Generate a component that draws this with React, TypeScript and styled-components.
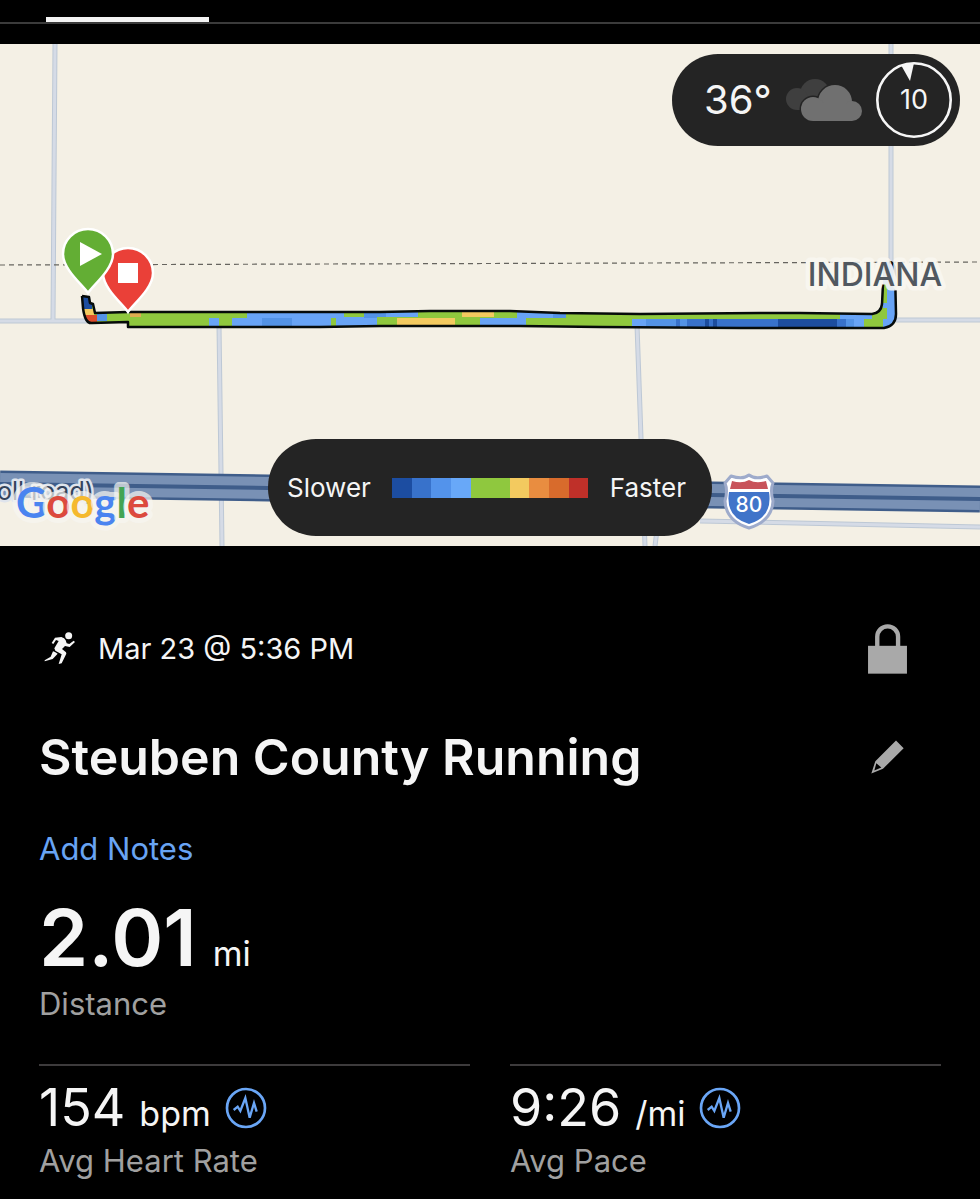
import React from "react";
import styled, { createGlobalStyle } from "styled-components";

const GlobalStyle = createGlobalStyle`
  *, *::before, *::after { box-sizing: border-box; }
  body {
    margin: 0;
    background: #000;
    color: #f5f5f5;
    font-family: Inter, "Liberation Sans", sans-serif;
  }
`;

const Page = styled.main`
  min-height: 100vh;
  background: #000;
`;

const TabBar = styled.header`
  height: 44px;
  padding: 17px 46px 0;
`;

const ActiveTab = styled.div`
  width: 163px;
  height: 5px;
  background: #f4f4f4;
`;

const TabRule = styled.div`
  height: 2px;
  margin: 0 -46px;
  background: #3b3b3b;
`;

const MapSection = styled.section`
  position: relative;
`;

const MapDrawing = styled.svg`
  display: block;
  width: 100%;
  height: auto;
`;

const Pill = styled.div`
  position: absolute;
  display: flex;
  align-items: center;
  background: #242424;
  border-radius: 48px;
`;

const WeatherPill = styled(Pill)`
  top: 10px;
  right: 20px;
  height: 92px;
  padding: 0 8px 0 32px;
`;

const Temperature = styled.span`
  width: 82px;
  font-size: 40px;
  line-height: 48px;
`;

const Dial = styled.div`
  display: flex;
  margin-left: 14px;
`;

const LegendPill = styled(Pill)`
  bottom: 10px;
  left: 50%;
  width: 444px;
  height: 97px;
  padding: 0 26px 0 19px;
  transform: translateX(-50%);
  justify-content: space-between;
  font-size: 26px;
  line-height: 32px;
`;

const Scale = styled.div`
  display: flex;
  width: 196px;
  height: 20px;
`;

const Swatch = styled.div<{ $color: string }>`
  flex: 1;
  background: ${(p) => p.$color};
`;

const Details = styled.section`
  padding: 70px 39px 16px;
`;

const Row = styled.div<{ $height: number }>`
  display: flex;
  align-items: center;
  justify-content: space-between;
  min-height: ${(p) => p.$height}px;
`;

const Meta = styled.div`
  display: flex;
  align-items: center;
  gap: 22px;
  padding-left: 5px;
  font-size: 29px;
  line-height: 40px;
`;

const Title = styled.h1`
  margin: 0;
  font-size: 50px;
  font-weight: 600;
  line-height: 64px;
`;

const IconButton = styled.button`
  display: flex;
  align-items: center;
  justify-content: center;
  width: 48px;
  height: 56px;
  margin-right: 30px;
  padding: 0;
  border: 0;
  background: none;
  color: #a9a9a9;
`;

const TitleRow = styled(Row)`
  margin: 43px 0 40px;
`;

const NotesButton = styled.button`
  display: block;
  padding: 0;
  border: 0;
  background: none;
  color: #68a4f4;
  font: inherit;
  font-size: 31px;
  line-height: 40px;
`;

const Distance = styled.div`
  margin: 24px 0 40px;
`;

const Reading = styled.div<{ $large?: boolean }>`
  display: flex;
  align-items: baseline;
  gap: ${(p) => (p.$large ? 16 : 14)}px;
  font-size: ${(p) => (p.$large ? 79 : 52)}px;
  font-weight: ${(p) => (p.$large ? 600 : 400)};
  line-height: ${(p) => (p.$large ? 88 : 60)}px;
`;

const Unit = styled.span`
  font-size: 34px;
  font-weight: 400;
  line-height: 34px;
`;

const StatLabel = styled.div`
  margin-top: 3px;
  color: #a0a0a0;
  font-size: 31px;
  line-height: 40px;
`;

const StatGrid = styled.div`
  display: grid;
  grid-template-columns: 1fr 1fr;
  gap: 40px;
`;

const Stat = styled.article`
  padding-top: 12px;
  border-top: 2px solid #3d3b3c;
`;

const ChartButton = styled.button`
  align-self: center;
  display: flex;
  padding: 0;
  border: 0;
  background: none;
  color: #6aa6f6;
`;

const paceColors = [
  "#1c4da1", "#3872cb", "#5393eb", "#68a8f8", "#8fc83e",
  "#8fc83e", "#f3ca5f", "#e98d40", "#d86b2c", "#bf3029",
];

const GREEN = "#8fc83e";
const SKY = "#68a4f6";
const AZURE = "#5393e6";
const BLUE = "#3872cb";
const NAVY = "#1c4d9f";
const YELLOW = "#f3ca5f";

// Pace segments of the route: x start, x end, y start, y end, colour.
const segments: [number, number, number, number, string][] = [
  [76, 92, 290, 309, NAVY],
  [84, 94, 309, 315, YELLOW],
  [84, 97, 315, 330, "#dc4b2b"],
  [97, 107, 313, 321, AZURE],
  [130, 141, 313, 317, "#dfae50"],
  [209, 219, 318, 330, SKY],
  [232, 377, 318, 330, SKY],
  [247, 374, 308, 318, SKY],
  [262, 292, 318, 330, AZURE],
  [331, 336, 318, 330, GREEN],
  [344, 364, 308, 317, GREEN],
  [364, 386, 308, 318, AZURE],
  [386, 418, 308, 317, SKY],
  [377, 397, 317, 330, GREEN],
  [397, 455, 318, 330, YELLOW],
  [462, 494, 308, 317, YELLOW],
  [480, 526, 318, 330, SKY],
  [517, 553, 308, 318, SKY],
  [553, 566, 308, 318, AZURE],
  [632, 646, 319, 330, SKY],
  [646, 687, 319, 330, AZURE],
  [676, 680, 319, 330, BLUE],
  [687, 846, 319, 330, BLUE],
  [705, 709, 319, 330, NAVY],
  [713, 717, 319, 330, NAVY],
  [778, 837, 319, 330, NAVY],
  [846, 854, 319, 330, AZURE],
  [854, 864, 319, 330, SKY],
  [840, 872, 308, 319, SKY],
  [883, 900, 255, 332, SKY],
  [882, 887, 284, 303, GREEN],
  [879, 887, 308, 319, GREEN],
];

const topEdge =
  "L95 313 L128 312 L300 312 L380 312 L430 311 L510 311 L560 313 L640 314 L760 313 L800 313 L872 314 Q881 313 882 304 L883 284";
const bottomEdge =
  "M82 296 L83 308 Q85 324 92 323 L128 322 L128 327 L320 327 L380 326 L520 326 L600 327 L740 328 L884 328 Q896 326 896 314 L895 270 Q894 262 889 262";

const roads =
  "M55 44 L53 320 M0 321 H88 M891 44 V265 M896 320 H980 M219 325 L222 546 M637 325 L641 438 L645 546 M657 530 L655 546 M700 521 L980 527";
const interstate = "M0 484 L268 488 L712 495 L980 499";

function RouteMap() {
  return (
    <MapDrawing viewBox="0 44 980 502" role="img" aria-label="Route map">
      <rect x="0" y="44" width="980" height="502" fill="#f4f0e5" />
      <path d={roads} fill="none" stroke="#bdc8d5" strokeWidth="5" />
      <path d={roads} fill="none" stroke="#d5dbe6" strokeWidth="3" />
      <path d="M0 265 L980 262" stroke="#66645f" strokeWidth="1.2" strokeDasharray="5 4" fill="none" />

      <path d={interstate} stroke="#3f5d8a" strokeWidth="27" fill="none" />
      <path d={interstate} stroke="#7991b5" strokeWidth="22" fill="none" />
      <path d={interstate} stroke="#3f5d8a" strokeWidth="4" fill="none" />

      <text x="-3" y="500" fontSize="25" fill="#33435b" stroke="#dfe4ec" strokeWidth="5"
        strokeLinejoin="round" paintOrder="stroke">oll road)</text>
      <text x="16" y="518" fontFamily="Lato, Inter, sans-serif" fontSize="42" fontWeight="700"
        stroke="#f7f6f2" strokeOpacity="0.7" strokeWidth="10" strokeLinejoin="round" paintOrder="stroke">
        <tspan fill="#4a84f0">G</tspan><tspan fill="#dc4a3d">o</tspan><tspan fill="#f5b92e">o</tspan><tspan fill="#4a84f0">g</tspan><tspan fill="#43a454">l</tspan><tspan fill="#dc4a3d">e</tspan>
      </text>

      <g strokeLinejoin="round">
        <path d="M749 475 Q743 480 731 476 L725 483 Q728 490 725 501 Q726 521 749 528 Q772 521 773 501 Q770 490 773 483 L767 476 Q755 480 749 475Z"
          fill="#fff" stroke="#9eabcb" strokeWidth="3" />
        <path d="M730 489 L732 481 Q742 484 749 480 Q756 484 766 481 L768 489Z" fill="#c8535b" />
        <path d="M729 492 H769 Q773 517 749 524 Q725 517 729 492Z" fill="#4174c9" />
      </g>
      <text x="749" y="512" fontSize="21" fontWeight="500" fill="#fff" textAnchor="middle">80</text>

      <clipPath id="ribbon">
        <path d={`${bottomEdge} L883 262 L883 284 L882 304 Q881 313 872 314 L800 313 L760 313 L640 314 L560 313 L510 311 L430 311 L380 312 L300 312 L128 312 L95 313 L93 304 L89 303 L89 297Z`} />
      </clipPath>
      <g clipPath="url(#ribbon)" shapeRendering="crispEdges">
        <rect x="76" y="255" width="824" height="77" fill={GREEN} />
        {segments.map(([x1, x2, y1, y2, color], i) => (
          <rect key={i} x={x1} y={y1} width={x2 - x1} height={y2 - y1} fill={color} />
        ))}
      </g>
      <g fill="none" stroke="#060b0a" strokeWidth="2.5" strokeLinejoin="round">
        <path d={bottomEdge} />
        <path d={`M82 296 L89 297 L90 303 L93 304 ${topEdge}`} />
      </g>

      <text x="875" y="286" fontSize="32" fontWeight="500" fill="#515860" textAnchor="middle"
        stroke="#f9f7f1" strokeOpacity="0.88" strokeWidth="9" strokeLinejoin="round" paintOrder="stroke">INDIANA</text>

      <g stroke="#fff" strokeWidth="2.5">
        <path d="M128 312 C124 305 103 289 103 273 A25 25 0 0 1 153 273 C153 289 132 305 128 312Z" fill="#ea4038" />
        <path d="M88 293 C84 286 63 270 63 254 A25 25 0 0 1 113 254 C113 270 92 286 88 293Z" fill="#63ae34" />
      </g>
      <rect x="118" y="263" width="20" height="20" fill="#fff" />
      <path d="M80 242 L102 254 L80 266Z" fill="#fff" />
    </MapDrawing>
  );
}

function CloudIcon() {
  return (
    <svg width="76" height="44" viewBox="786 78 76 44" aria-hidden="true">
      <g fill="#3f3f3f">
        <circle cx="815" cy="94" r="15" />
        <circle cx="797" cy="99" r="11" />
        <rect x="797" y="96" width="20" height="14" />
      </g>
      <g fill="#707070">
        <g stroke="#242424" strokeWidth="3">
          <circle cx="835" cy="102" r="17" />
          <circle cx="813" cy="109" r="12" />
          <circle cx="852" cy="111" r="10" />
        </g>
        <circle cx="835" cy="102" r="17" />
        <circle cx="813" cy="109" r="12" />
        <circle cx="852" cy="111" r="10" />
        <rect x="813" y="104" width="39" height="17" />
      </g>
    </svg>
  );
}

function WindDial() {
  return (
    <svg width="76" height="76" viewBox="876 62 76 76" role="img" aria-label="Wind 10">
      <circle cx="914" cy="100" r="36.7" fill="none" stroke="#f6f6f6" strokeWidth="2.6" />
      <path d="M901 65 L914 63 L910 81Z" fill="#f6f6f6" />
      <text x="914" y="109" fontSize="27" fill="#f6f6f6" textAnchor="middle">10</text>
    </svg>
  );
}

function RunnerIcon() {
  return (
    <svg width="32" height="34" viewBox="71 66 96 102" fill="currentColor" aria-hidden="true">
      <circle cx="145" cy="77" r="10.5" />
      <path d="M104 83 L123 81 Q133 83 136 91 L139 100 L147 102 L160 92 L164 96 L148 111 L134 108 L125 117 L137 127 L138 131 L124 160 L115 162 L124 133 L105 122 L102 115 L115 93 L107 90 L99 102 L94 99Z" />
      <path d="M104 126 L112 131 L97 147 L73 154 L73 151 L91 140 L98 124Z" />
    </svg>
  );
}

function LockIcon() {
  return (
    <svg width="39" height="50" viewBox="84 40 116 149" aria-hidden="true">
      <rect x="84" y="105" width="116" height="83" fill="currentColor" />
      <path d="M111.500 108 V78 a31 31 0 0 1 62 0 V108" fill="none" stroke="currentColor" strokeWidth="13" />
    </svg>
  );
}

function PencilIcon() {
  return (
    <svg width="33" height="34" viewBox="93 387 99 101" aria-hidden="true">
      <path fill="currentColor" fillRule="evenodd"
        d="M168 388 L191 411 L129 473 L94 487 L106 450Z M109 456 L124 469 L103 478Z" />
    </svg>
  );
}

function PulseIcon() {
  return (
    <svg width="42" height="42" viewBox="619 114 126 126" fill="none" stroke="currentColor" aria-hidden="true">
      <circle cx="682" cy="177" r="57" strokeWidth="8" />
      <path d="M645 183 L657 173 L665 186 L680 147 L693 206 L706 162 L714 188" strokeWidth="7" />
    </svg>
  );
}

const stats = [
  { value: "154", unit: "bpm", label: "Avg Heart Rate" },
  { value: "9:26", unit: "/mi", label: "Avg Pace" },
];

export default function App() {
  return (
    <Page>
      <GlobalStyle />
      <TabBar>
        <ActiveTab />
        <TabRule />
      </TabBar>
      <MapSection>
        <RouteMap />
        <WeatherPill>
          <Temperature>36°</Temperature>
          <CloudIcon />
          <Dial>
            <WindDial />
          </Dial>
        </WeatherPill>
        <LegendPill>
          <span>Slower</span>
          <Scale>
            {paceColors.map((color, i) => (
              <Swatch key={i} $color={color} />
            ))}
          </Scale>
          <span>Faster</span>
        </LegendPill>
      </MapSection>
      <Details>
        <Row $height={66}>
          <Meta>
            <RunnerIcon />
            <span>Mar 23 @ 5:36 PM</span>
          </Meta>
          <IconButton aria-label="Privacy">
            <LockIcon />
          </IconButton>
        </Row>
        <TitleRow $height={64}>
          <Title>Steuben County Running</Title>
          <IconButton aria-label="Edit title">
            <PencilIcon />
          </IconButton>
        </TitleRow>
        <NotesButton>Add Notes</NotesButton>
        <Distance>
          <Reading $large>
            2.01 <Unit>mi</Unit>
          </Reading>
          <StatLabel>Distance</StatLabel>
        </Distance>
        <StatGrid>
          {stats.map((stat) => (
            <Stat key={stat.label}>
              <Reading>
                {stat.value} <Unit>{stat.unit}</Unit>
                <ChartButton aria-label={`${stat.label} chart`}>
                  <PulseIcon />
                </ChartButton>
              </Reading>
              <StatLabel>{stat.label}</StatLabel>
            </Stat>
          ))}
        </StatGrid>
      </Details>
    </Page>
  );
}
